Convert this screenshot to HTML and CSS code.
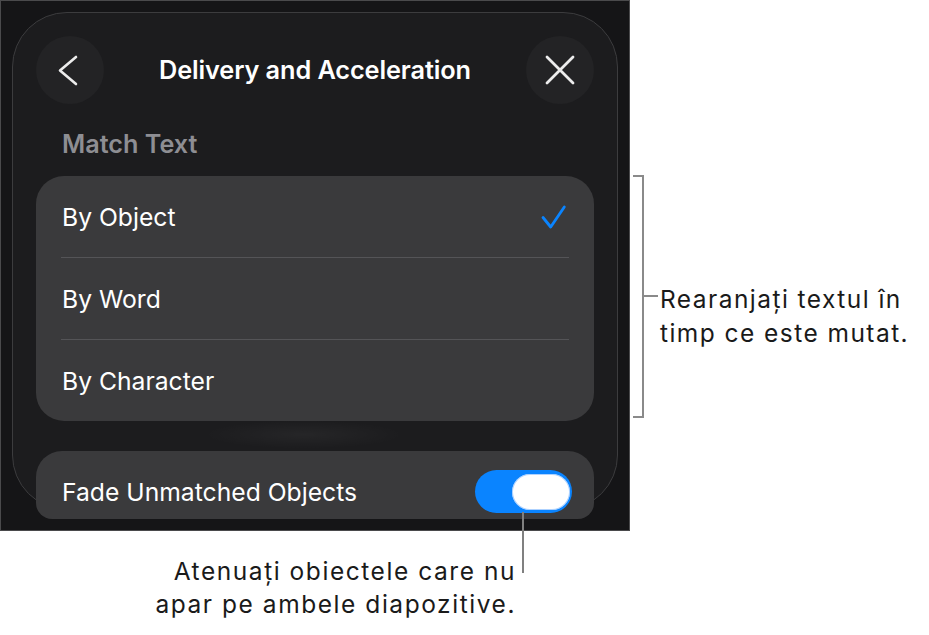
FILE: index.html
```html
<!DOCTYPE html>
<html lang="ro">
<head>
<meta charset="utf-8">
<title>Delivery and Acceleration</title>
<link rel="stylesheet" href="styles.css">
</head>
<body>
<div class="stage">
  <div class="top">
    <div class="device">
      <div class="panel">
        <div class="header">
          <div class="round-btn">
            <svg width="68" height="68" viewBox="0 0 68 68"><polyline points="40,21 24,34.5 40,48" fill="none" stroke="#ececec" stroke-width="2.6" stroke-linecap="round" stroke-linejoin="round"/></svg>
          </div>
          <div class="title">Delivery and Acceleration</div>
          <div class="round-btn">
            <svg width="68" height="68" viewBox="0 0 68 68"><path d="M21 21 L47 47 M47 21 L21 47" fill="none" stroke="#ececec" stroke-width="2.8" stroke-linecap="round"/></svg>
          </div>
        </div>
        <div class="section-label">Match Text</div>
        <div class="card list">
          <div class="row">
            <span>By Object</span>
            <svg class="check" width="26" height="24" viewBox="0 0 26 24"><polyline points="2,12.5 9.7,22 23.3,2" fill="none" stroke="#0a84ff" stroke-width="2.8" stroke-linecap="round" stroke-linejoin="round"/></svg>
          </div>
          <div class="row"><span>By Word</span></div>
          <div class="row"><span>By Character</span></div>
        </div>
        <div class="gap"></div>
        <div class="card fade">
          <span>Fade Unmatched Objects</span>
          <div class="toggle"><div class="knob"></div></div>
        </div>
      </div>
    </div>
    <div class="callout-right">
      <div class="bracket"></div>
      <div class="lead">
        <div class="tick"></div>
        <div class="callout-text">Rearanjați textul în<br>timp ce este mutat.</div>
      </div>
    </div>
  </div>
  <div class="callout-bottom">
    <div class="callout-text right">Atenuați obiectele care nu<br>apar pe ambele diapozitive.</div>
    <div class="vline"></div>
  </div>
</div>
</body>
</html>
```

FILE: styles.css
```css
* { box-sizing: border-box; }
html, body { margin: 0; padding: 0; background: #ffffff; }
body { font-family: Inter, "Noto Sans", sans-serif; }

.stage { width: 929px; height: 635px; overflow: hidden; }
.top { display: flex; align-items: flex-start; }

.device {
  width: 630px;
  height: 531px;
  flex: none;
  background: #151517;
  border: 1px solid #4a4a4c;
  overflow: hidden;
  padding: 11px 11px 0 11px;
}

.panel {
  height: 498px;
  background: #1c1c1e;
  border: 1px solid #3c3c3e;
  border-radius: 55px;
  padding: 23px 23px 0 23px;
}

.header {
  display: flex;
  align-items: center;
  justify-content: space-between;
  height: 68px;
}
.round-btn {
  width: 68px; height: 68px;
  border-radius: 50%;
  background: #232325;
  display: flex; align-items: center; justify-content: center;
}
.round-btn svg { display: block; }
.title {
  color: #ffffff;
  font-size: 25.3px;
  font-weight: 600;
  letter-spacing: -0.1px;
  padding-bottom: 1px;
}

.section-label {
  color: #8e8e93;
  font-size: 25.2px;
  font-weight: 600;
  line-height: 29px;
  margin: 26px 0 0 26px;
  height: 46px;
}

.card { background: #3a3a3c; color: #ffffff; font-size: 24.7px; }
.list { border-radius: 28px; height: 245px; display: flex; flex-direction: column; }
.row {
  flex: 1;
  margin: 0 25px;
  display: flex; align-items: center; justify-content: space-between;
  padding-left: 1px;
  border-bottom: 1.5px solid #545457;
}
.row:last-child { border-bottom: none; }
.check { margin-right: 2px; }

.gap {
  height: 30px;
  background: radial-gradient(ellipse 100px 14px at 48% 45%, rgba(255,255,255,0.045), rgba(255,255,255,0));
}

.fade {
  height: 68px;
  border-radius: 26px 26px 16px 16px;
  display: flex; align-items: flex-start; justify-content: space-between;
  padding: 26px 22px 0 26px;
  margin-bottom: -40px;
}
.toggle {
  width: 97px; height: 43px;
  margin-top: -7px;
  border-radius: 22px;
  background: #0a84ff;
  padding: 4px 2px 0 0;
  display: flex; justify-content: flex-end;
}
.knob {
  width: 58px; height: 36px;
  border-radius: 18px;
  background: #ffffff;
  box-shadow: inset 0 0 0 1px rgba(120,180,255,0.6);
}

.callout-text {
  color: #1a1a1a;
  font-size: 24.5px;
  letter-spacing: 1.45px;
  line-height: 34px;
  white-space: nowrap;
}

.callout-right {
  display: flex;
  align-items: flex-start;
  margin: 175px 0 0 3px;
  height: 243px;
}
.bracket {
  width: 11px; height: 243px;
  border: 2px solid #8a8a8a;
  border-left: none;
}
.lead { display: flex; align-items: flex-start; margin-top: 107px; }
.tick { width: 14px; height: 2px; background: #8a8a8a; margin-top: 13px; margin-right: 2px; }

.callout-bottom {
  width: 524px;
  display: flex;
  justify-content: flex-end;
  align-items: flex-start;
}
.callout-bottom .right { text-align: right; margin-top: 24px; line-height: 33px; letter-spacing: 1.55px; }
.vline { width: 2px; height: 61px; margin-top: -19px; margin-left: 6px; background: #808080; }
```
